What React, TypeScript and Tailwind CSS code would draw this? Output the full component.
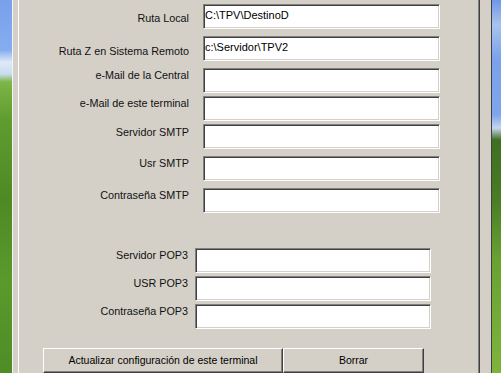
import React from "react";

interface Campo {
  label: string;
  value?: string;
  gap: string;
  labelPad: string;
}

// campos de la configuración de correo / rutas
const camposPrincipales: Campo[] = [
  { label: "Ruta Local", value: "C:\\TPV\\DestinoD", gap: "mt-0", labelPad: "pt-[8px]" },
  { label: "Ruta Z en Sistema Remoto", value: "c:\\Servidor\\TPV2", gap: "mt-[7px]", labelPad: "pt-[9px]" },
  { label: "e-Mail de la Central", gap: "mt-[7px]", labelPad: "pt-[1px]" },
  { label: "e-Mail de este terminal", gap: "mt-[3px]", labelPad: "pt-[1px]" },
  { label: "Servidor SMTP", gap: "mt-[3px]", labelPad: "pt-[2px]" },
  { label: "Usr SMTP", gap: "mt-[7px]", labelPad: "pt-[1px]" },
  { label: "Contraseña SMTP", gap: "mt-[7px]", labelPad: "pt-[1px]" },
];

const camposPop: Campo[] = [
  { label: "Servidor POP3", gap: "mt-0", labelPad: "pt-[1px]" },
  { label: "USR POP3", gap: "mt-[3px]", labelPad: "pt-[1px]" },
  { label: "Contraseña POP3", gap: "mt-[3px]", labelPad: "pt-[1px]" },
];

const Edit = ({ value, className }: { value?: string; className: string }) => (
  <input
    readOnly
    value={value || ""}
    className={`h-[25px] shrink-0 border border-t-[#808080] border-l-[#808080] border-b-white border-r-white bg-white pl-[1px] pt-0 pb-[4px] text-[11px] leading-[13px] text-black outline-none shadow-[inset_1px_1px_0_#404040,inset_-1px_-1px_0_#d4d0c8] ${className}`}
  />
);

const Boton = ({ text, className }: { text: string; className: string }) => (
  <button
    className={`flex h-[25px] shrink-0 items-center justify-center border border-t-white border-l-white border-b-[#404040] border-r-[#404040] bg-[#d4d0c8] pb-[1px] text-[10.5px] text-black shadow-[inset_-1px_-1px_0_#808080] ${className}`}
  >
    {text}
  </button>
);

const App = () => {
  return (
    <div className="flex h-[373px] w-[501px] overflow-hidden bg-[#d4d0c8] font-['Liberation_Sans',Arial,sans-serif] text-[10.8px] leading-[13px] text-[#111]">
      {/* fondo de escritorio, lado izquierdo */}
      <div className="w-[12px] shrink-0 bg-[linear-gradient(to_bottom,#79a0ea_0px,#86acf0_50px,#dfe9f7_62px,#c9dcef_74px,#7db547_82px,#5f9c2f_120px,#4e8a24_200px,#5a9a2c_280px,#4f8c26_373px)]" />

      {/* ventana */}
      <div className="flex w-[480px] shrink-0 border-l border-r border-l-[#f4f4f4] border-r-[#404040] bg-[#d4d0c8] pl-[5px] pr-[11px]">
        <div className="flex w-[462px] flex-col border-l border-r border-l-white border-r-[#404040] pt-[4px] shadow-[inset_-1px_0_0_#808080]">
          {camposPrincipales.map((c) => (
            <div key={c.label} className={`flex ${c.gap}`}>
              <span className={`w-[170px] shrink-0 text-right ${c.labelPad}`}>{c.label}</span>
              <Edit value={c.value} className="ml-[14px] w-[237px]" />
            </div>
          ))}

          <div className="mt-[35px] flex flex-col">
            {camposPop.map((c) => (
              <div key={c.label} className={`flex ${c.gap}`}>
                <span className={`w-[169px] shrink-0 text-right ${c.labelPad}`}>{c.label}</span>
                <Edit className="ml-[7px] w-[236px]" />
              </div>
            ))}
          </div>

          <div className="ml-[24px] mt-[19px] flex">
            <Boton text="Actualizar configuración de este terminal" className="w-[240px]" />
            <Boton text="Borrar" className="w-[141px]" />
          </div>
        </div>
      </div>

      {/* fondo de escritorio, lado derecho */}
      <div className="w-[9px] shrink-0 bg-[linear-gradient(to_bottom,#6e97e6_0px,#a9c3ef_25px,#7aa1ea_60px,#7fa5ec_115px,#c5d6ef_128px,#3f6e22_140px,#4a7d25_200px,#6aa232_260px,#7eb43c_373px)]" />
    </div>
  );
};

export default App;
